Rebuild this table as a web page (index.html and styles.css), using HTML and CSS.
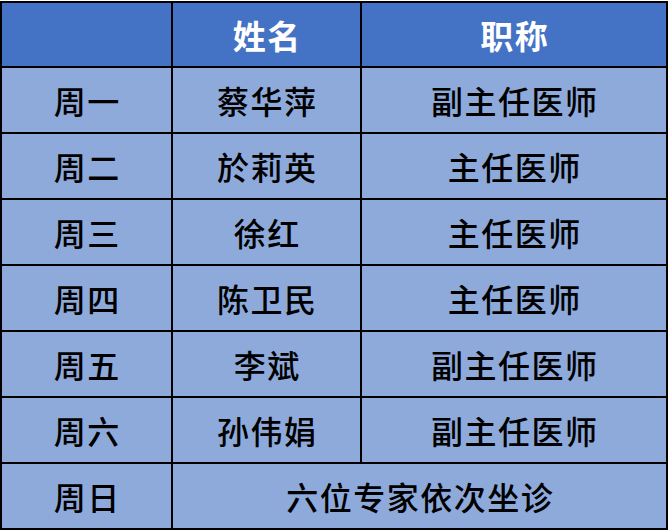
FILE: index.html
```html
<!DOCTYPE html>
<html lang="zh">
<head>
<meta charset="utf-8">
<link rel="stylesheet" href="styles.css">
</head>
<body>
<div class="schedule">
  <div class="cell head"></div>
  <div class="cell head">姓名</div>
  <div class="cell head">职称</div>

  <div class="cell">周一</div>
  <div class="cell">蔡华萍</div>
  <div class="cell">副主任医师</div>

  <div class="cell">周二</div>
  <div class="cell">於莉英</div>
  <div class="cell">主任医师</div>

  <div class="cell">周三</div>
  <div class="cell">徐红</div>
  <div class="cell">主任医师</div>

  <div class="cell">周四</div>
  <div class="cell">陈卫民</div>
  <div class="cell">主任医师</div>

  <div class="cell">周五</div>
  <div class="cell">李斌</div>
  <div class="cell">副主任医师</div>

  <div class="cell">周六</div>
  <div class="cell">孙伟娟</div>
  <div class="cell">副主任医师</div>

  <div class="cell">周日</div>
  <div class="cell span2">六位专家依次坐诊</div>
</div>
</body>
</html>
```
FILE: styles.css
```css
html, body {
  margin: 0;
  padding: 0;
  background: #ffffff;
}
body {
  padding-top: 1px;
}
.schedule {
  display: grid;
  grid-template-columns: 169px 187px 304px;
  grid-template-rows: 63px repeat(7, 64px);
  gap: 2px;
  padding: 2px;
  background: #000000;
  width: 668px;
  box-sizing: border-box;
}
.cell {
  background: #8eaadb;
  color: #000000;
  display: flex;
  align-items: center;
  justify-content: center;
  font-family: "Noto Sans CJK SC", "Noto Sans", sans-serif;
  font-weight: 500;
  font-size: 32px;
  letter-spacing: 1.5px;
  padding-left: 1.5px;
}
.head {
  background: #4472c4;
  color: #ffffff;
  font-weight: 700;
  font-size: 33px;
}
.span2 {
  grid-column: 2 / span 2;
}
```
